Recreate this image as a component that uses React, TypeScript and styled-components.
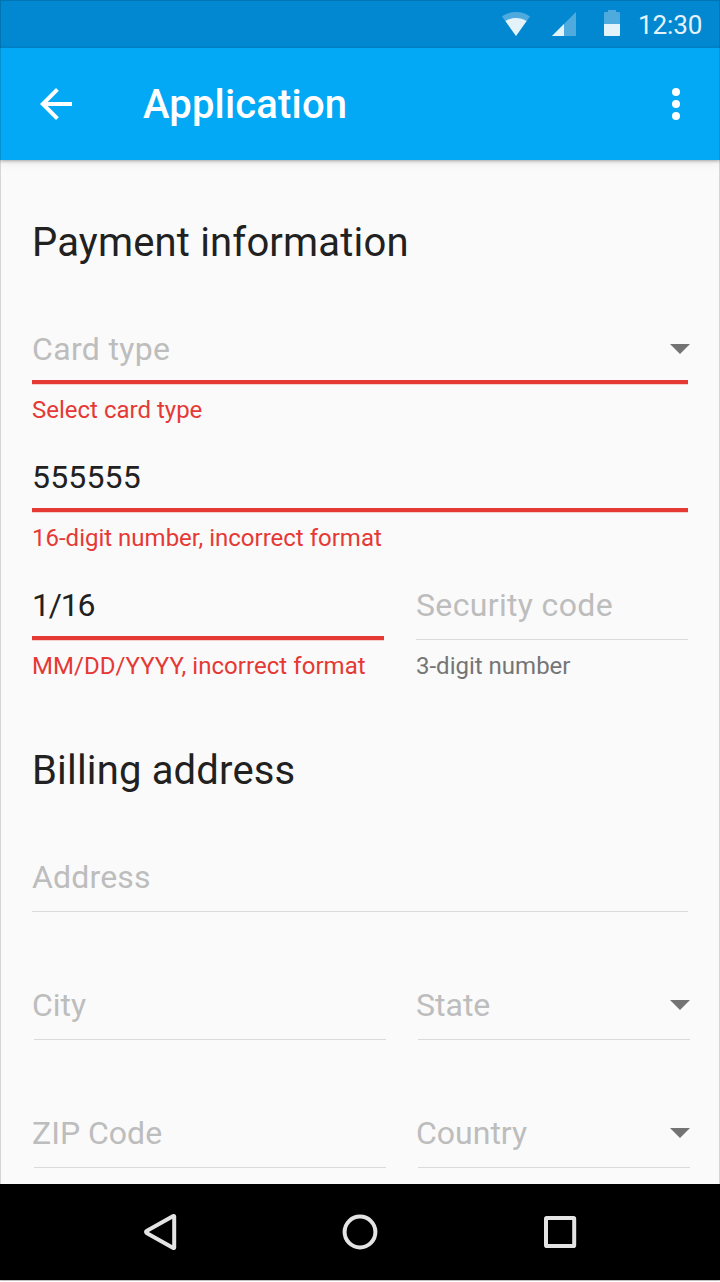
import React from "react";
import styled, { createGlobalStyle } from "styled-components";

const GlobalStyle = createGlobalStyle`
  *, *::before, *::after { box-sizing: border-box; }
  body { margin: 0; background: #fff; font-family: Roboto, "Liberation Sans", sans-serif; }
  svg { display: block; flex: none; }
`;

const Screen = styled.div`
  position: relative;
  display: flex;
  flex-direction: column;
  width: 720px;
  height: 1281px;
  padding-bottom: 1px;

  &::after {
    content: "";
    position: absolute;
    inset: 0;
    border: 1px solid rgba(0, 0, 0, 0.14);
    border-bottom-color: rgba(0, 0, 0, 0.24);
    pointer-events: none;
    z-index: 2;
  }
`;

const StatusBar = styled.div`
  display: flex;
  align-items: center;
  justify-content: flex-end;
  flex: none;
  height: 48px;
  padding-right: 18px;
  background: #0288d1;
`;

const StatusIcons = styled.svg`
  margin-right: 17px;
`;

const Clock = styled.time`
  color: #e4f2fa;
  font-size: 26px;
  line-height: 48px;
  width: 65px;
  white-space: nowrap;
  padding: 1px 0 0 1px;
  letter-spacing: -0.1px;
`;

const AppBar = styled.header`
  position: relative;
  z-index: 1;
  display: flex;
  align-items: center;
  flex: none;
  height: 112px;
  padding: 0 20px 0 32px;
  background: #03a9f4;
  color: #fff;
  box-shadow: 0 1px 3px rgba(0, 0, 0, 0.3), 0 3px 8px rgba(0, 0, 0, 0.08);
`;

const IconButton = styled.button`
  flex: none;
  width: 48px;
  height: 48px;
  padding: 0;
  border: 0;
  background: none;
  color: inherit;
`;

const Title = styled.h1`
  flex: 1;
  margin: 2px 0 0 63px;
  font-size: 40px;
  font-weight: 500;
  line-height: 56px;
  letter-spacing: 0.16px;
`;

const Content = styled.main`
  flex: 1;
  min-height: 0;
  overflow: hidden;
  padding: 12px 32px 0;
  background: #fafafa;
`;

const SectionTitle = styled.h2`
  height: 144px;
  margin: 0;
  color: #212121;
  font-size: 40px;
  font-weight: 400;
  line-height: 142px;
  letter-spacing: 0.17px;
`;

const FieldRow = styled.div`
  display: grid;
  grid-template-columns: 352px 272px;
  column-gap: 32px;
`;

const FieldBox = styled.div`
  height: 128px;
`;

const Control = styled.div`
  display: flex;
  align-items: center;
  justify-content: space-between;
  height: 64px;
  margin-right: -2px;
  padding-top: 2px;
`;

const Value = styled.span<{ $filled: boolean; $tracking: number }>`
  color: ${(p) => (p.$filled ? "#212121" : "#bdbdbd")};
  font-size: 32px;
  line-height: 62px;
  letter-spacing: ${(p) => p.$tracking}px;
`;

const Underline = styled.div<{ $error: boolean; $inset: boolean }>`
  height: ${(p) => (p.$error ? "5px" : "1px")};
  margin: ${(p) => (p.$error ? "0" : "3px 0 1px")};
  transform: ${(p) => (p.$inset ? "translateX(2px)" : "none")};
  background: ${(p) => (p.$error ? "#e53935" : "#dadada")};
  border-bottom: ${(p) => (p.$error ? "1px solid #f4cfce" : "0")};
`;

const Helper = styled.div<{ $error: boolean; $tracking: number }>`
  color: ${(p) => (p.$error ? "#e53935" : "#757575")};
  font-size: 24px;
  line-height: 50px;
  letter-spacing: ${(p) => p.$tracking}px;
  white-space: nowrap;
`;

const NavBar = styled.nav`
  display: flex;
  align-items: center;
  justify-content: center;
  gap: 152px;
  flex: none;
  height: 96px;
  background: #000;
`;

interface FieldProps {
  label: string;
  value?: string;
  helper?: string;
  error?: boolean;
  select?: boolean;
  inset?: boolean;
  tracking?: number;
  helperTracking?: number;
}

function Field({
  label,
  value,
  helper,
  error = false,
  select = false,
  inset = false,
  tracking = 0,
  helperTracking = 0,
}: FieldProps) {
  return (
    <FieldBox>
      <Control>
        <Value $filled={Boolean(value)} $tracking={tracking}>
          {value ?? label}
        </Value>
        {select && (
          <svg width="20" height="10" viewBox="0 0 20 10">
            <path d="M0 0h20L10 10z" fill="#737373" />
          </svg>
        )}
      </Control>
      <Underline $error={error} $inset={inset} />
      {helper && (
        <Helper $error={error} $tracking={helperTracking}>
          {helper}
        </Helper>
      )}
    </FieldBox>
  );
}

export default function App() {
  return (
    <>
      <GlobalStyle />
      <Screen>
        <StatusBar>
          <StatusIcons width="118" height="48" viewBox="502 0 118 48">
            <path d="M502 16.4C506 13.5 511 12 516 12s10 1.500 14 4.400L516 36z" fill="#4faade" />
            <path d="M505.400 21C508.500 19 512 18 516 18s7.500 1 10.600 3L516 36z" fill="#e4f2fa" />
            <path d="M576 12v24h-24z" fill="#4faade" />
            <path d="M564 24v12h-12z" fill="#e4f2fa" />
            <path d="M608 10h8v2h3a1 1 0 0 1 1 1v11h-16V13a1 1 0 0 1 1-1h3z" fill="#4faade" />
            <path d="M604 24h16v11a1 1 0 0 1-1 1h-14a1 1 0 0 1-1-1z" fill="#e4f2fa" />
          </StatusIcons>
          <Clock>12:30</Clock>
        </StatusBar>
        <AppBar>
          <IconButton aria-label="Back">
            <svg width="48" height="48" viewBox="0 0 24 24" fill="currentColor">
              <path d="M20 11H7.830l5.590-5.590L12 4l-8 8 8 8 1.410-1.410L7.830 13H20v-2z" />
            </svg>
          </IconButton>
          <Title>Application</Title>
          <IconButton aria-label="More options">
            <svg width="48" height="48" viewBox="0 0 24 24" fill="currentColor">
              <circle cx="12" cy="6" r="2" />
              <circle cx="12" cy="12" r="2" />
              <circle cx="12" cy="18" r="2" />
            </svg>
          </IconButton>
        </AppBar>
        <Content>
          <SectionTitle>Payment information</SectionTitle>
          <Field label="Card type" helper="Select card type" error select tracking={0.34} />
          <Field
            label="Card number"
            value="555555"
            helper="16-digit number, incorrect format"
            error
            tracking={0.16}
          />
          <FieldRow>
            <Field
              label="Expiration date"
              value="1/16"
              helper="MM/DD/YYYY, incorrect format"
              error
              tracking={-1.2}
              helperTracking={0.05}
            />
            <Field label="Security code" helper="3-digit number" tracking={0.34} />
          </FieldRow>
          <SectionTitle>Billing address</SectionTitle>
          <Field label="Address" tracking={0.16} />
          <FieldRow>
            <Field label="City" inset />
            <Field label="State" select inset />
          </FieldRow>
          <FieldRow>
            <Field label="ZIP Code" inset />
            <Field label="Country" select inset />
          </FieldRow>
        </Content>
        <NavBar>
          <svg width="48" height="48" viewBox="0 0 48 48" fill="none" stroke="#e4e4e4" strokeWidth="4" strokeLinejoin="round">
            <path d="M38.200 8.600V39.400Q38.200 40.400 37.300 39.900L11 25.200Q9 24 11 22.800L37.300 8.100Q38.200 7.600 38.200 8.600z" />
          </svg>
          <svg width="48" height="48" viewBox="0 0 48 48" fill="none" stroke="#e4e4e4" strokeWidth="4">
            <circle cx="24" cy="24" r="15.400" />
          </svg>
          <svg width="48" height="48" viewBox="0 0 48 48" fill="none" stroke="#e4e4e4" strokeWidth="4">
            <rect x="10" y="10" width="28.200" height="28" rx="0.800" />
          </svg>
        </NavBar>
      </Screen>
    </>
  );
}
